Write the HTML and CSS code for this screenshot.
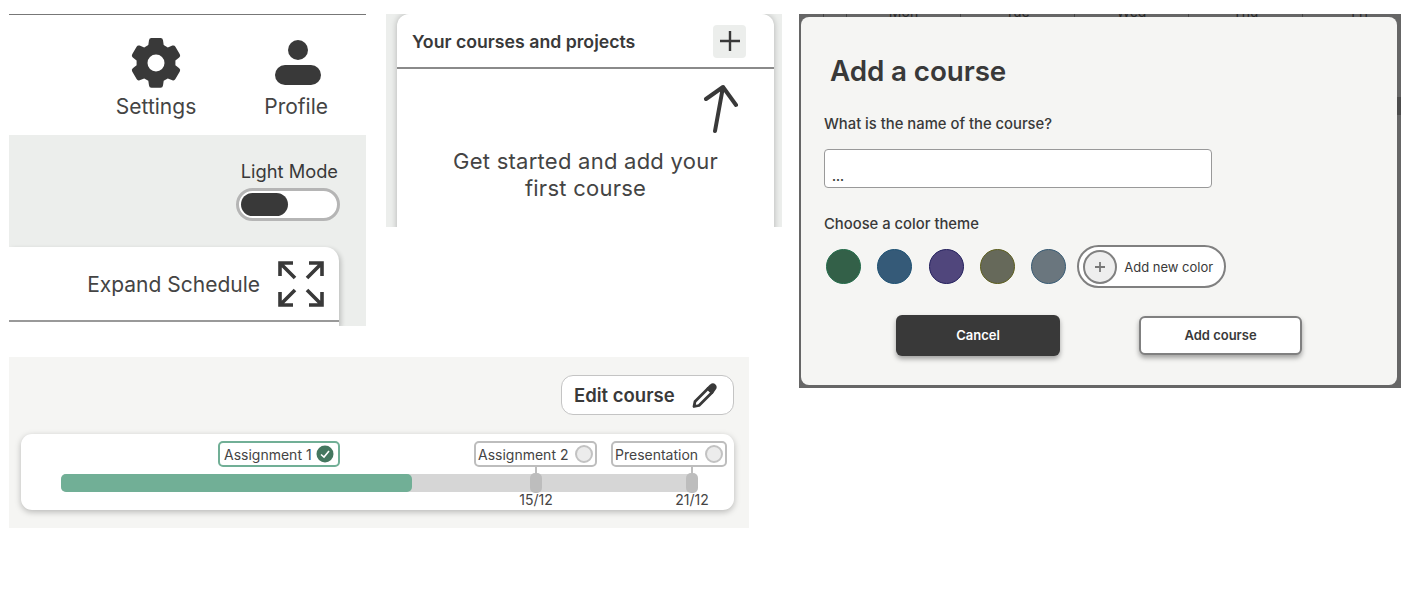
FILE: index.html
```html
<!DOCTYPE html>
<html lang="en">
<head>
    <meta charset="UTF-8">
    <title>Course planner components</title>
    <link rel="stylesheet" href="styles.css">
</head>
<body>
    <div class="left">
        <div class="top-row">
            <section class="side">
                <div class="side-top">
                    <div class="nav-item">
                        <svg width="52" height="52" viewBox="0 0 52 52"><path fill="#393939" fill-rule="evenodd" d="M21.500 1h9a2.500 2.500 0 0 1 2.500 2.200l.7 4.800 4.100 2.400 4.600-1.800a2.500 2.500 0 0 1 3 1.100l4.400 7.600a2.500 2.500 0 0 1-.6 3.200l-3.800 3v4.800l3.800 3a2.500 2.500 0 0 1 .6 3.200l-4.400 7.600a2.500 2.500 0 0 1-3 1.100l-4.600-1.800-4.100 2.400-.7 4.800a2.500 2.500 0 0 1-2.500 2.200h-9a2.500 2.500 0 0 1-2.500-2.200l-.7-4.800-4.100-2.400-4.600 1.800a2.500 2.500 0 0 1-3-1.100l-4.400-7.600a2.500 2.500 0 0 1 .6-3.200l3.800-3v-4.800l-3.800-3a2.500 2.500 0 0 1-.6-3.200l4.400-7.600a2.500 2.500 0 0 1 3-1.100l4.600 1.800 4.100-2.400.7-4.800A2.500 2.500 0 0 1 21.500 1zM26 17.500a8.500 8.500 0 1 0 0 17 8.500 8.500 0 0 0 0-17z"/></svg>
                        <span>Settings</span>
                    </div>
                    <div class="nav-item">
                        <svg class="profile-icon" width="52" height="52" viewBox="0 0 52 52"><circle cx="26" cy="13" r="10" fill="#393939"/><rect x="3" y="28" width="46" height="20" rx="10" fill="#393939"/></svg>
                        <span>Profile</span>
                    </div>
                </div>
                <div class="side-bottom">
                    <div class="mode">
                        <span>Light Mode</span>
                        <div class="toggle"><div class="knob"></div></div>
                    </div>
                    <div class="expand">
                        <span>Expand Schedule</span>
                        <svg width="48" height="48" viewBox="0 0 48 48" fill="none" stroke="#393939" stroke-width="3.600"><path d="M3 16V3h13M3 3l15 15M32 3h13v13M45 3 30 18M3 32v13h13M3 45l15-15M45 32v13H32M45 45 30 30"/></svg>
                    </div>
                </div>
            </section>

            <section class="courses">
                <div class="courses-card">
                    <div class="courses-head">
                        <h2>Your courses and projects</h2>
                        <div class="plus-btn">
                            <svg width="20" height="20" viewBox="0 0 20 20" stroke="#393939" stroke-width="2.400"><path d="M10 0v20M0 10h20"/></svg>
                        </div>
                    </div>
                    <svg class="arrow" width="36" height="50" viewBox="0 0 36 50" fill="none" stroke="#393939" stroke-width="4" stroke-linecap="round" stroke-linejoin="round"><path d="M13 47 21 3M4 15 21 3l13 18"/></svg>
                    <p>Get started and add your<br>first course</p>
                </div>
            </section>
        </div>

        <section class="course">
            <div class="edit-row">
                <div class="edit-btn">
                    <span>Edit course</span>
                    <svg width="28" height="28" viewBox="0 0 28 28" fill="none" stroke="#393939" stroke-width="2.800" stroke-linejoin="round"><path d="M3 25.500l1-5L17 7.500l4 4L8 24.500z"/><path d="M17 7.500l3-3q2-1.500 3.500 0t0 3.500L21 11.500z" fill="#393939"/></svg>
                </div>
            </div>
            <div class="timeline">
                <div class="tags">
                    <div class="tag tag-done">Assignment 1
                        <svg width="18" height="18" viewBox="0 0 18 18"><circle cx="9" cy="9" r="8.500" fill="#44775f"/><path d="M5 9.500 8 12l5-6" fill="none" stroke="#fff" stroke-width="1.600"/></svg>
                    </div>
                    <div class="tag tag-two">Assignment 2 <i class="dot"></i></div>
                    <div class="tag tag-three">Presentation <i class="dot"></i></div>
                </div>
                <div class="bar">
                    <div class="bar-fill" style="width: 55.4%"></div>
                    <div class="marker marker-one"><b>15/12</b></div>
                    <div class="marker marker-two"><b>21/12</b></div>
                </div>
            </div>
        </section>
    </div>

    <section class="modal-wrap">
        <div class="calendar-strip">
            <span class="gutter"></span>
            <span class="day">Mon</span>
            <span class="day">Tue</span>
            <span class="day">Wed</span>
            <span class="day">Thu</span>
            <span class="day">Fri</span>
        </div>
        <div class="modal">
            <h1>Add a course</h1>
            <label class="field-label">What is the name of the course?</label>
            <div class="input">...</div>
            <label class="field-label theme-label">Choose a color theme</label>
            <div class="colors">
                <i class="swatch s1"></i>
                <i class="swatch s2"></i>
                <i class="swatch s3"></i>
                <i class="swatch s4"></i>
                <i class="swatch s5"></i>
                <div class="new-color">
                    <div class="new-plus">
                        <svg width="10" height="10" viewBox="0 0 10 10" stroke="#777" stroke-width="1.800"><path d="M5 0v10M0 5h10"/></svg>
                    </div>
                    <span>Add new color</span>
                </div>
            </div>
            <div class="actions">
                <div class="btn btn-dark">Cancel</div>
                <div class="btn btn-light">Add course</div>
            </div>
        </div>
    </section>
</body>
</html>
```

FILE: styles.css
```css
:root {
    --dark: #393939;
    --panel: #f5f5f3;
    --side: #eceeec;
    --line: #8a8a8a;
}

* {
    box-sizing: border-box;
}

body {
    margin: 0;
    padding: 14px 13px 0 9px;
    display: flex;
    gap: 17px;
    align-items: flex-start;
    font-family: Inter, "Liberation Sans", sans-serif;
    color: var(--dark);
    background: #fff;
}

.left {
    width: 773px;
    flex: none;
}

.top-row {
    display: flex;
    gap: 20px;
    align-items: flex-start;
}

/* settings + profile panel */
.side {
    width: 357px;
    height: 312px;
    display: flex;
    flex-direction: column;
}

.side-top {
    height: 121px;
    border-top: 1px solid #777;
    display: flex;
    justify-content: flex-end;
    gap: 68px;
    padding: 21px 38px 0 0;
}

.nav-item {
    display: flex;
    flex-direction: column;
    align-items: center;
    font-size: 21px;
    line-height: 24px;
    color: #444;
    gap: 6px;
}

.nav-item svg {
    margin-top: 1px;
}

.nav-item .profile-icon {
    margin-left: 4px;
}

.side-bottom {
    flex: 1;
    background: var(--side);
    overflow: hidden;
}

.mode {
    width: 330px;
    display: flex;
    flex-direction: column;
    align-items: flex-end;
    padding: 25px 1px 0 0;
    font-size: 18.300px;
    line-height: 22px;
}

.toggle {
    width: 104px;
    height: 33px;
    margin: 6px -2px 0 0;
    padding: 2px;
    background: #fff;
    border: 3px solid #b5b5b5;
    border-radius: 17px;
}

.knob {
    width: 47px;
    height: 23px;
    background: var(--dark);
    border-radius: 12px;
}

.expand {
    width: 330px;
    height: 79px;
    margin-top: 26px;
    padding: 0 14px 5px 0;
    background: #fff;
    border-radius: 0 14px 0 0;
    box-shadow: 2px 2px 5px rgba(0, 0, 0, 0.2);
    display: flex;
    justify-content: flex-end;
    align-items: center;
    gap: 17px;
    font-size: 21px;
    color: #444;
    position: relative;
}

.expand::after {
    content: "";
    position: absolute;
    left: 0;
    right: 0;
    top: 73px;
    border-top: 2px solid #999;
}

/* courses panel */
.courses {
    width: 396px;
    height: 213px;
    padding: 0 8px 0 11px;
    background: var(--side);
    overflow: hidden;
}

.courses-card {
    height: 240px;
    background: #fff;
    border-radius: 12px 12px 0 0;
    box-shadow: 0 0 6px rgba(0, 0, 0, 0.25);
    text-align: center;
}

.courses-head {
    height: 55px;
    border-bottom: 2px solid var(--line);
    display: flex;
    justify-content: space-between;
    align-items: center;
    padding: 1px 28px 0 15px;
}

.courses-head h2 {
    margin: 0;
    font-size: 17.700px;
    font-weight: 600;
}

.plus-btn {
    width: 33px;
    height: 33px;
    background: var(--side);
    border-radius: 4px;
    display: flex;
    justify-content: center;
    align-items: center;
}

.arrow {
    display: block;
    margin: 15px 0 0 305px;
}

.courses-card p {
    margin: 14px 0 0;
    font-size: 22px;
    line-height: 27px;
    letter-spacing: 0.25px;
    color: #444;
}

/* course progress */
.course {
    width: 740px;
    height: 171px;
    margin-top: 31px;
    padding: 18px 15px 0 12px;
    background: var(--panel);
}

.edit-row {
    display: flex;
    justify-content: flex-end;
}

.edit-btn {
    width: 173px;
    height: 40px;
    background: #fff;
    border: 1px solid #c4c4c4;
    border-radius: 12px;
    display: flex;
    justify-content: space-between;
    align-items: center;
    padding: 0 14px 0 12px;
    font-size: 18.500px;
    font-weight: 600;
}

.timeline {
    height: 76px;
    margin-top: 19px;
    background: #fff;
    border-radius: 11px;
    box-shadow: 0 2px 6px rgba(0, 0, 0, 0.25);
    padding-top: 7px;
}

.tags {
    height: 26px;
    display: flex;
    padding-left: 197px;
}

.tag {
    height: 26px;
    background: #fff;
    border: 2px solid #bdbdbd;
    border-radius: 5px;
    display: flex;
    align-items: center;
    justify-content: space-between;
    padding: 0 2px 0 2px;
    font-size: 14px;
    color: #444;
}

.tag-done {
    width: 122px;
    border-color: #71af96;
    padding: 0 4px;
}

.tag-two {
    width: 123px;
    margin-left: 134px;
}

.tag-three {
    width: 116px;
    margin-left: 14px;
}

.dot {
    width: 18px;
    height: 18px;
    border-radius: 50%;
    background: #ececec;
    border: 2px solid #c2c2c2;
}

.bar {
    height: 18px;
    margin: 7px 0 0 40px;
    width: 633px;
    background: #d6d6d6;
    border-radius: 5px;
    position: relative;
}

.bar-fill {
    height: 100%;
    background: #71af96;
    border-radius: 5px;
}

.marker {
    position: absolute;
    top: -1px;
    width: 12px;
    height: 20px;
    background: #bdbdbd;
    border-radius: 5px;
}

.marker::before {
    content: "";
    position: absolute;
    left: 5px;
    top: -7px;
    height: 7px;
    border-left: 2px solid #bdbdbd;
}

.marker b {
    position: absolute;
    top: 18px;
    left: 50%;
    transform: translateX(-50%);
    font-weight: 400;
    font-size: 14px;
    line-height: 17px;
    color: #444;
}

.marker-one {
    left: 469px;
}

.marker-two {
    left: 625px;
}

/* add course modal */
.modal-wrap {
    width: 602px;
    height: 374px;
    background: linear-gradient(#4c4c4c, #4c4c4c) right 83px / 4px 18px no-repeat, #666;
    padding: 0 4px 3px 2px;
    display: flex;
    flex-direction: column;
}

.calendar-strip {
    height: 3px;
    overflow: hidden;
    display: flex;
    align-items: flex-end;
    flex: none;
    margin-left: 22px;
}

.gutter {
    width: 23px;
    height: 11px;
    border-left: 1px solid #444;
    flex: none;
}

.day {
    width: 114px;
    height: 11px;
    flex: none;
    border-left: 1px solid #444;
    text-align: center;
    font-size: 14px;
    line-height: 11px;
    color: #2a2a2a;
}

.modal {
    flex: 1;
    background: var(--panel);
    border-radius: 8px;
    padding: 34px 0 0 23px;
}

.modal h1 {
    margin: 0 0 0 6px;
    font-size: 27.800px;
    line-height: 40px;
    font-weight: 600;
    letter-spacing: -0.1px;
}

.field-label {
    display: block;
    margin-top: 23px;
    font-size: 14.800px;
    line-height: 20px;
    font-weight: 500;
}

.input {
    width: 388px;
    height: 39px;
    margin-top: 15px;
    background: #fff;
    border: 1px solid #999;
    border-radius: 4px;
    padding: 17px 0 0 7px;
    font-size: 12px;
    line-height: 20px;
    font-weight: 700;
}

.theme-label {
    margin-top: 26px;
}

.colors {
    display: flex;
    align-items: center;
    margin-top: 11px;
    padding-left: 2px;
    gap: 16.250px;
}

.swatch {
    width: 35px;
    height: 35px;
    border-radius: 50%;
    border: 1.500px solid;
}

.s1 { background: #336048; border-color: #246c4b; }
.s2 { background: #355a78; border-color: #1d5173; }
.s3 { background: #50467c; border-color: #231f5c; }
.s4 { background: #66695a; border-color: #5c5d1c; }
.s5 { background: #6a767e; border-color: #375a73; }

.new-color {
    width: 149px;
    height: 43px;
    margin-left: -5px;
    background: #fff;
    border: 2px solid #808080;
    border-radius: 22px;
    display: flex;
    align-items: center;
    gap: 7px;
    padding-left: 4px;
    font-size: 13px;
}

.new-plus {
    width: 34px;
    height: 34px;
    border-radius: 50%;
    background: #eeeeee;
    border: 2px solid #808080;
    display: flex;
    justify-content: center;
    align-items: center;
}

.actions {
    display: flex;
    align-items: center;
    gap: 79px;
    margin: 27px 0 0 72px;
}

.btn {
    width: 163px;
    height: 39px;
    border-radius: 6px;
    display: flex;
    justify-content: center;
    align-items: center;
    padding-bottom: 2px;
    font-size: 13px;
    font-weight: 600;
    box-shadow: 0 3px 5px rgba(0, 0, 0, 0.35);
}

.btn-dark {
    width: 164px;
    height: 41px;
    background: var(--dark);
    color: #fff;
}

.btn-light {
    background: #fff;
    border: 2px solid #808080;
}
```
